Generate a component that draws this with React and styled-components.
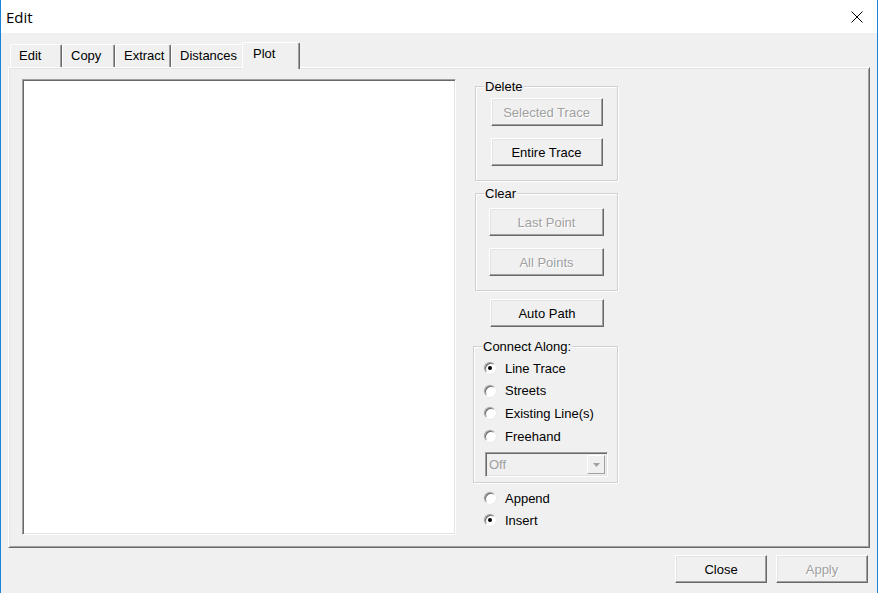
import React from 'react';
import styled, { createGlobalStyle } from 'styled-components';

const Global = createGlobalStyle`
  html, body { margin: 0; padding: 0; background: #fff; }
  body { font-family: "Liberation Sans", Arial, sans-serif; font-size: 13px; color: #000; }
  * { box-sizing: border-box; }
`;

const Window = styled.div`
  width: 878px;
  height: 593px;
  background: #f0f0f0;
  border-left: 1px solid #1883d7;
  border-right: 1px solid #1883d7;
  display: flex;
  flex-direction: column;
  overflow: hidden;
`;

const TitleBar = styled.div`
  height: 33px;
  flex: none;
  background: #fff;
  display: flex;
  align-items: center;
  justify-content: space-between;
  padding: 0 14px 0 5px;
`;

const Title = styled.span`
  font-family: "Open Sans", "Noto Sans", sans-serif;
  font-size: 15px;
  color: #000;
`;

const Body = styled.div`
  flex: 1;
  display: flex;
  flex-direction: column;
  padding: 9px 7px 10px 7px;
  min-height: 0;
`;

const TabStrip = styled.div`
  height: 25px;
  flex: none;
  display: flex;
  align-items: flex-end;
  padding-left: 2px;
`;

const Tab = styled.div`
  width: ${p => p.$w}px;
  height: ${p => (p.$active ? 27 : 23)}px;
  margin: 0 ${p => (p.$active ? -2 : 0)}px ${p => (p.$active ? -2 : 0)}px ${p => (p.$active ? -2 : 0)}px;
  position: relative;
  z-index: ${p => (p.$active ? 2 : 1)};
  background: #f0f0f0;
  border: 1px solid;
  border-bottom: none;
  border-color: #fff #696969 transparent #fff;
  box-shadow: inset -1px 0 0 #a0a0a0;
  border-radius: 2px 2px 0 0;
  padding: 3px 0 0 ${p => (p.$active ? 10 : 8)}px;
  line-height: 15px;
  white-space: nowrap;
`;

const Panel = styled.div`
  flex: 1;
  display: flex;
  align-items: stretch;
  border: 1px solid;
  border-color: #fff #696969 #696969 #fff;
  box-shadow: inset 1px 1px 0 #e3e3e3, inset -1px -1px 0 #a0a0a0;
  padding: 11px 12px 12px 13px;
  min-height: 0;
`;

const ListBox = styled.div`
  width: 434px;
  flex: none;
  background: #fff;
  border: 1px solid;
  border-color: #a0a0a0 #fff #fff #a0a0a0;
  box-shadow: inset 1px 1px 0 #696969, inset -1px -1px 0 #e3e3e3;
`;

const RightCol = styled.div`
  width: 145px;
  margin-left: 17px;
  display: flex;
  flex-direction: column;
  align-items: stretch;
`;

const Group = styled.fieldset`
  margin: ${p => p.$mt || 0}px 0 0 ${p => p.$ml || 0}px;
  padding: ${p => p.$pt}px 0 ${p => p.$pb}px 8px;
  border: 1px solid #d0d0d0;
  box-shadow: inset 1px 1px 0 #fff, 1px 1px 0 #fff;
  min-width: 0;
  display: flex;
  flex-direction: column;
  align-items: ${p => p.$align || 'stretch'};
  gap: ${p => p.$gap || 0}px;
`;

const Legend = styled.legend`
  padding: 0 1px;
  margin: 0;
  line-height: 15px;
  font-size: 13px;
  background: #f0f0f0;
`;

const ButtonStack = styled.div`
  display: flex;
  flex-direction: column;
  align-items: center;
  gap: 12px;
  margin-left: -8px;
  margin-right: ${p => p.$mr || 0}px;
`;

const Btn = styled.button`
  width: ${p => p.$w}px;
  height: 28px;
  flex: none;
  padding: 0;
  margin: ${p => p.$mt || 0}px 0 0 ${p => p.$ml || 0}px;
  align-self: ${p => (p.$self ? p.$self : 'auto')};
  font: 13px "Liberation Sans", Arial, sans-serif;
  color: #000;
  background: #f0f0f0;
  border: 1px solid;
  border-color: #fff #696969 #696969 #fff;
  box-shadow: inset -1px -1px 0 #a0a0a0, inset 1px 1px 0 #e3e3e3;
  &:disabled {
    color: #a0a0a0;
    text-shadow: 1px 1px 0 #fff;
  }
`;

const RadioList = styled.div`
  display: flex;
  flex-direction: column;
  margin-top: ${p => p.$mt || 0}px;
  padding-left: ${p => p.$indent || 0}px;
`;

const RadioRow = styled.label`
  height: ${p => p.$h}px;
  display: flex;
  align-items: center;
  gap: 9px;
  line-height: 15px;
`;

const RadioCircle = styled.span`
  width: 12px;
  height: 12px;
  flex: none;
  border-radius: 50%;
  background: #fff;
  border: 1px solid;
  border-color: #a0a0a0 #fff #fff #a0a0a0;
  box-shadow: inset 1px 1px 0 #696969, 0 0 0 0.5px #e3e3e3;
  display: flex;
  align-items: center;
  justify-content: center;
  &::after {
    content: '';
    width: 4px;
    height: 4px;
    border-radius: 50%;
    background: #000;
    display: ${p => (p.$on ? 'block' : 'none')};
  }
`;

const Combo = styled.div`
  width: 123px;
  height: 25px;
  margin: 5px 0 0 3px;
  border: 1px solid;
  border-color: #a0a0a0 #fff #fff #a0a0a0;
  box-shadow: inset 1px 1px 0 #696969, inset -1px -1px 0 #e3e3e3;
  background: #f0f0f0;
  display: flex;
  align-items: center;
  padding: 2px;
`;

const ComboText = styled.span`
  flex: 1;
  color: #a0a0a0;
  padding-left: 1px;
`;

const ComboArrow = styled.span`
  width: 18px;
  height: 100%;
  display: flex;
  align-items: center;
  justify-content: center;
  background: #f0f0f0;
  border: 1px solid;
  border-color: #fff #a0a0a0 #a0a0a0 #fff;
`;

const Footer = styled.div`
  flex: none;
  display: flex;
  justify-content: flex-end;
  gap: 9px;
  margin-top: 7px;
  padding-right: 2px;
`;

const CloseX = () => (
  <svg width="12" height="12" viewBox="0 0 12 12">
    <path d="M0.5 0.5 L11.5 11.5 M11.5 0.5 L0.5 11.5" stroke="#000" strokeWidth="1" fill="none" />
  </svg>
);

const Radio = ({ on, h, children }) => (
  <RadioRow $h={h}>
    <RadioCircle $on={on} />
    <span>{children}</span>
  </RadioRow>
);

export default function App() {
  return (
    <>
      <Global />
      <Window>
        <TitleBar>
          <Title>Edit</Title>
          <CloseX />
        </TitleBar>
        <Body>
          <TabStrip>
            <Tab $w={52}>Edit</Tab>
            <Tab $w={53}>Copy</Tab>
            <Tab $w={56}>Extract</Tab>
            <Tab $w={73}>Distances</Tab>
            <Tab $w={58} $active>Plot</Tab>
          </TabStrip>
          <Panel>
            <ListBox />
            <RightCol>
              <Group $ml={2} $pt={4} $pb={14}>
                <Legend>Delete</Legend>
                <ButtonStack>
                  <Btn $w={112} disabled>Selected Trace</Btn>
                  <Btn $w={112}>Entire Trace</Btn>
                </ButtonStack>
              </Group>
              <Group $ml={2} $mt={5} $pt={7} $pb={14}>
                <Legend>Clear</Legend>
                <ButtonStack>
                  <Btn $w={115} disabled>Last Point</Btn>
                  <Btn $w={115} disabled>All Points</Btn>
                </ButtonStack>
              </Group>
              <Btn $w={114} $ml={17} $mt={8} $self="flex-start">Auto Path</Btn>
              <Group $mt={12} $pt={3} $pb={5}>
                <Legend>Connect Along:</Legend>
                <RadioList $indent={2}>
                  <Radio on h={22.6}>Line Trace</Radio>
                  <Radio h={22.6}>Streets</Radio>
                  <Radio h={22.6}>Existing Line(s)</Radio>
                  <Radio h={22.6}>Freehand</Radio>
                </RadioList>
                <Combo>
                  <ComboText>Off</ComboText>
                  <ComboArrow>
                    <svg width="7" height="4" viewBox="0 0 7 4">
                      <path d="M0 0 H7 L3.5 4 Z" fill="#a0a0a0" />
                    </svg>
                  </ComboArrow>
                </Combo>
              </Group>
              <RadioList $indent={11} $mt={4}>
                <Radio h={22}>Append</Radio>
                <Radio on h={22}>Insert</Radio>
              </RadioList>
            </RightCol>
          </Panel>
          <Footer>
            <Btn $w={92}>Close</Btn>
            <Btn $w={92} disabled>Apply</Btn>
          </Footer>
        </Body>
      </Window>
    </>
  );
}
